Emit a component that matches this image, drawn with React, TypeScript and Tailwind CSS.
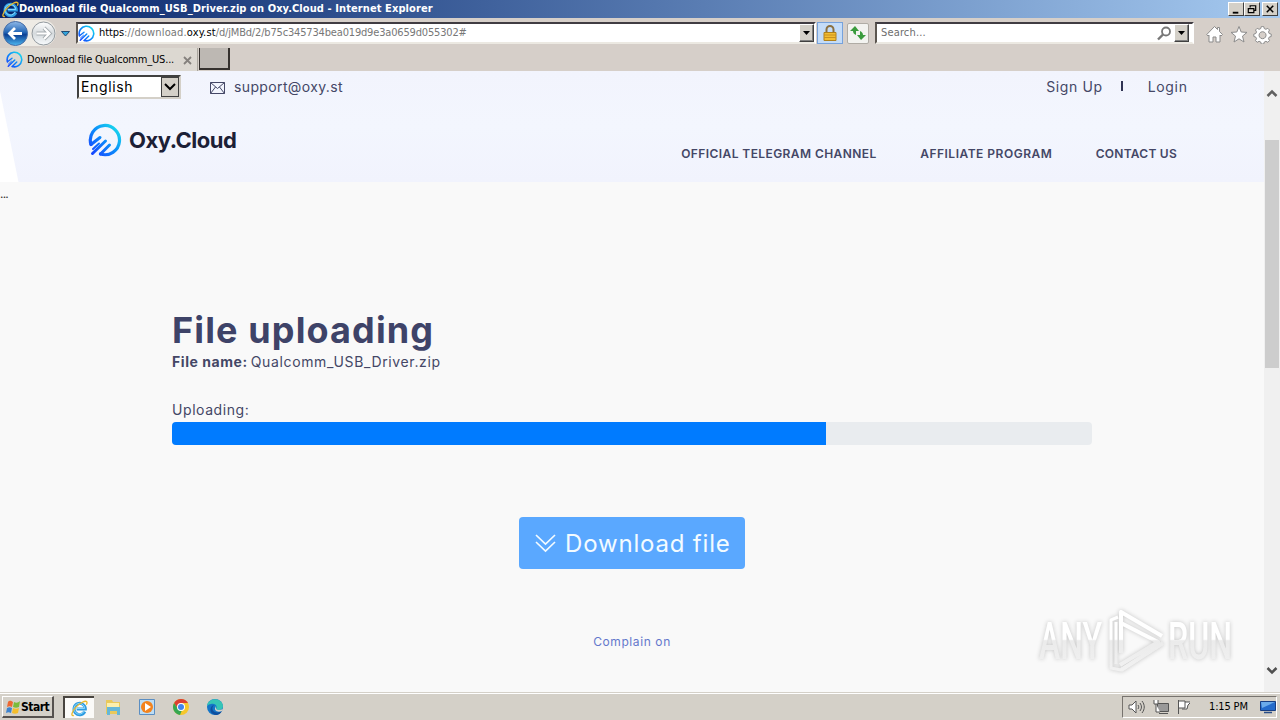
import React from "react";

const OxyLogo: React.FC<{ size: number; id: string }> = ({ size, id }) => (
  <svg width={size} height={size} viewBox="0 0 34 34" fill="none" className="shrink-0">
    <defs>
      <linearGradient id={id} x1="4" y1="30" x2="30" y2="4" gradientUnits="userSpaceOnUse">
        <stop stopColor="#1746ff" />
        <stop offset="0.5" stopColor="#0b8dfa" />
        <stop offset="1" stopColor="#19dcec" />
      </linearGradient>
    </defs>
    <g stroke={`url(#${id})`} strokeWidth="3.2" strokeLinecap="round">
      <path d="M3 21.500A14.600 14.600 0 1 1 12.500 31" />
      <path d="M3 21.500 12 14.500M4.500 30.500 17.500 18M12.500 31 21.500 22" strokeWidth="3" />
      <path d="M5 26 11 20.500" strokeWidth="2" />
    </g>
  </svg>
);

const IeIcon: React.FC<{ size: number }> = ({ size }) => (
  <svg width={size} height={size} viewBox="0 0 18 18" fill="none" className="shrink-0">
    <path
      d="M14.6 12.2A6 6 0 1 1 15.2 9.6H6"
      stroke="#2e9be0"
      strokeWidth="3.2"
    />
    <path d="M14 11.6A5.7 5.7 0 1 1 14.5 9H6" stroke="#8edcff" strokeWidth="1" />
    <path
      d="M3 16.2C-.4 17.6.5 12.6 5 7.8 9.5 3 15.200 .2 16.6 1.800c.7.9.2 2.200-.4 3.200"
      stroke="#e9b92c"
      strokeWidth="1.4"
    />
  </svg>
);

const TitleBar: React.FC = () => (
  <div className="flex h-[18px] items-center bg-linear-to-r from-[#0a246a] to-[#a6caf0] pl-[2px] pr-[2px]">
    <IeIcon size={17} />
    <span className="whitespace-nowrap pt-px text-[11px] font-bold tracking-[0.090px] text-white">
      Download file Qualcomm_USB_Driver.zip on Oxy.Cloud - Internet Explorer
    </span>
    <div className="ml-auto flex">
      <WinButton>
        <path d="M4 10.500h6" strokeWidth="2" />
      </WinButton>
      <WinButton>
        <path d="M5.500 5V3h6v5h-2M3.500 6h6v4.500h-6zM3 6h7M5 3h7" strokeWidth="1.300" />
      </WinButton>
      <div className="w-[2px]" />
      <WinButton>
        <path d="M4 3l7 7M11 3l-7 7" strokeWidth="1.700" />
      </WinButton>
    </div>
  </div>
);

const WinButton: React.FC<{ children: React.ReactNode }> = ({ children }) => (
  <div className="h-[14px] w-[16px] border border-b-[#404040] border-l-white border-r-[#404040] border-t-white bg-[#d4d0c8]">
    <svg width="14" height="12" viewBox="0 0 15 13" fill="none" stroke="#000">
      {children}
    </svg>
  </div>
);

const DropButton: React.FC = () => (
  <div className="flex h-[18px] w-[15px] shrink-0 items-center justify-center border border-b-[#404040] border-l-white border-r-[#404040] border-t-white bg-[#d4d0c8] shadow-[inset_-1px_-1px_#808080]">
    <svg width="7" height="4" viewBox="0 0 7 4">
      <path d="M0 0h7L3.500 4z" />
    </svg>
  </div>
);

const NavBar: React.FC = () => (
  <div className="flex h-[30px] items-center">
    <svg width="76" height="30" viewBox="0 0 76 30" fill="none" className="shrink-0">
      <defs>
        <linearGradient id="back" x1="0" y1="0" x2="0" y2="1">
          <stop stopColor="#8fb9e8" />
          <stop offset="0.45" stopColor="#2366b6" />
          <stop offset="0.55" stopColor="#0b3f94" />
          <stop offset="1" stopColor="#4db9f2" />
        </linearGradient>
        <linearGradient id="forward" x1="0" y1="0" x2="0" y2="1">
          <stop stopColor="#fff" />
          <stop offset="0.5" stopColor="#d5dadd" />
          <stop offset="1" stopColor="#f8fbfd" />
        </linearGradient>
      </defs>
      <path d="M15 2h28a13 13 0 0 1 0 26H15z" fill="#eeebe5" />
      <circle cx="15.500" cy="15.500" r="12" fill="url(#back)" stroke="#456ca6" />
      <path d="M22 15.500H10M15 10l-5.500 5.500L15 21" stroke="#fff" strokeWidth="2.800" />
      <circle cx="43.500" cy="15.500" r="11.500" fill="url(#forward)" stroke="#92999e" />
      <path d="M36.500 15.500H49M44 10l5.500 5.500L44 21" stroke="#a6acb0" strokeWidth="4" />
      <path d="M36.500 15.500H49M44 10l5.500 5.500L44 21" stroke="#fff" strokeWidth="2.200" />
      <path d="M61.500 13.500h8l-4 4.500z" fill="#32a5dc" stroke="#224c74" />
    </svg>
    <div className="flex h-[22px] w-[740px] items-center border-2 border-b-[#ece9e2] border-l-[#5c5650] border-r-white border-t-[#403c42] bg-white">
      <OxyLogo size={17} id="oxyUrl" />
      <span className="ml-[4px] whitespace-nowrap pt-px text-[11px] text-[#777]">
        <span className="tracking-[-0.100px] text-black">https</span>
        <span className="tracking-[0.150px]">://download.</span>
        <span className="tracking-[0.150px] text-black">oxy.st</span>
        <span className="tracking-[-0.170px]">/d/jMBd/2/b75c345734bea019d9e3a0659d055302#</span>
      </span>
      <div className="ml-auto">
        <DropButton />
      </div>
    </div>
    <div className="ml-px flex h-[22px] w-[26px] items-center justify-center border border-[#76a2dc] bg-[#c4dcf8]">
      <svg width="14" height="17" viewBox="0 0 14 17" fill="none">
        <path d="M3.500 8V4.500a3.500 3.500 0 0 1 7 0V8" stroke="#8b7040" strokeWidth="2" />
        <path d="M1 7.500h12v8H1z" fill="#f2bd32" stroke="#af801c" />
        <path d="M1 10h12M1 12.500h12" stroke="#c9911f" />
      </svg>
    </div>
    <div className="ml-[4px] flex h-[21px] w-[22px] items-center justify-center rounded-xs border border-[#b0aca5] bg-[#f3f3f0]">
      <svg width="16" height="14" viewBox="0 0 16 14" fill="#3a9b3d">
        <path d="M5 0 0 5h3c0 2 1 3 3 4V5h3zM11 14l5-5h-3c0-2-1-3-3-4v4H7z" />
      </svg>
    </div>
    <div className="ml-[6px] flex h-[22px] w-[319px] items-center border-2 border-b-[#ece9e2] border-l-[#5c5650] border-r-white border-t-[#403c42] bg-white pr-[3px]">
      <span className="ml-[4px] pt-px text-[11px] tracking-[0.150px] text-[#6d6d6d]">Search...</span>
      <svg width="15" height="15" viewBox="0 0 15 15" fill="none" stroke="#777" className="ml-auto mr-[2px]">
        <circle cx="9" cy="5.500" r="4" strokeWidth="1.800" />
        <path d="m6 8.500-5 5" strokeWidth="2.400" />
      </svg>
      <DropButton />
    </div>
    <svg width="70" height="20" viewBox="0 0 70 20" fill="#fff" stroke="#8b8b8b" className="ml-[12px] mt-[2px] shrink-0">
      <path d="m.8 10.500 7.700-8 3 3V3.500h2v4l3 3-1.500 1.500-1-1v7h-4v-5H7v5H3v-7l-1 1z" />
      <path d="m33 2.500 2.200 5.500 5.800.4-4.500 3.700 1.500 5.900-5-3.200-5 3.200 1.500-5.900L25 8.400l5.800-.4z" />
      <path
        fillRule="evenodd"
        d="m56.300 2.500 1.400.1.600 2 1.600.7 1.900-1 1.700 1.700-1 1.900.7 1.600 2 .6v2.400l-2 .6-.7 1.600 1 1.900-1.700 1.700-1.900-1-1.600.7-.6 2h-2.400l-.6-2-1.600-.7-1.900 1-1.700-1.700 1-1.900-.7-1.600-2-.6v-2.400l2-.6.7-1.600-1-1.900 1.700-1.700 1.900 1 1.600-.7.6-2zM56.500 7.700a3.500 3.500 0 1 0 .1 0z"
      />
    </svg>
  </div>
);

const TabBar: React.FC = () => (
  <div className="flex h-[23px] items-start">
    <div className="flex h-[23px] w-[198px] items-center border-r border-[#aaa69e] bg-[#dcd8d1] pl-[6px]">
      <OxyLogo size={17} id="oxyTab" />
      <span className="ml-[4px] w-[154px] whitespace-nowrap pt-[2px] text-[11px] tracking-[-0.180px] text-black">
        Download file Qualcomm_US...
      </span>
      <svg width="9" height="9" viewBox="0 0 9 9" stroke="#85817d" strokeWidth="1.800" className="ml-[2px] mt-px">
        <path d="m1 1 7 7M8 1 1 8" />
      </svg>
    </div>
    <div className="ml-[1px] h-[22px] w-[31px] border-b-2 border-l border-r-2 border-[#35312e] bg-[#bdb8b3]" />
  </div>
);

const SiteHeader: React.FC = () => (
  <header className="relative h-[111px] bg-linear-to-b from-[#f2f4fd] via-[#f3f6fe] to-[#f1f3fd]">
    <svg width="20" height="111" viewBox="0 0 20 111" className="absolute left-0 top-0">
      <path d="M0 20 18.500 111H0z" fill="#fff" />
    </svg>
    <div className="flex h-[32px] items-center pl-[77px] pr-[77px] text-[14px] text-[#444766]">
      <div className="flex h-[24px] w-[104px] items-center justify-between border-2 border-b-[#d4d0c8] border-l-[#404040] border-r-[#d4d0c8] border-t-[#404040] bg-white pl-[2px] text-black">
        <span className="pb-px tracking-[0.650px]">English</span>
        <div className="flex h-[20px] w-[18px] items-center justify-center border border-[#404040] bg-[#d4d0c8]">
          <svg width="12" height="8" viewBox="0 0 12 8" fill="none" stroke="#000" strokeWidth="2">
            <path d="m1 1 5 5 5-5" />
          </svg>
        </div>
      </div>
      <svg width="15" height="12" viewBox="0 0 15 12" fill="none" stroke="#444766" className="ml-[29px] mt-[1px]">
        <path d="M.5.5h14v11H.5zM.5.500l7 6 7-6M.5 11.500 5.500 5M14.500 11.500 9.500 5" />
      </svg>
      <span className="ml-[9px] pb-[2px] tracking-[0.370px]">support@oxy.st</span>
      <span className="ml-auto pb-[2px] tracking-[0.600px]">Sign Up</span>
      <div className="mb-[2px] ml-[18px] mr-[25px] h-[10px] w-[2px] bg-[#303453]" />
      <span className="-mr-[0.7px] pb-[2px] tracking-[0.700px]">Login</span>
    </div>
    <div className="flex h-[79px] pl-[88px] pr-[87px]">
      <div className="flex h-[74px] items-center">
        <OxyLogo size={34} id="oxyMain" />
        <b className="ml-[7px] text-[22px] tracking-[-0.490px] text-[#1c2036]">Oxy.Cloud</b>
      </div>
      <nav className="ml-auto mt-[42px] flex gap-[43.500px] whitespace-nowrap text-[12px] font-semibold text-[#444766]">
        <span className="tracking-[0.420px]">OFFICIAL TELEGRAM CHANNEL</span>
        <span className="tracking-[0.500px]">AFFILIATE PROGRAM</span>
        <span className="tracking-[0.250px]">CONTACT US</span>
      </nav>
    </div>
  </header>
);

const Watermark: React.FC = () => (
  <svg
    width="210"
    height="76"
    viewBox="0 0 210 76"
    className="absolute bottom-[14px] right-[20px] drop-shadow-[0_0_2px_#c4c4c4]"
  >
    <defs>
      <linearGradient id="mark" x1="0" y1="0" x2="0" y2="76" gradientUnits="userSpaceOnUse">
        <stop offset="0.49" stopColor="#fff" />
        <stop offset="0.51" stopColor="#ebebeb" />
        <stop offset="1" stopColor="#f3f3f3" />
      </linearGradient>
    </defs>
    <g fill="url(#mark)" fontFamily="Roboto, sans-serif" fontSize="51" fontWeight="500">
      <text x="5" y="57" textLength="63" lengthAdjust="spacingAndGlyphs">ANY</text>
      <text x="134" y="57" textLength="64" lengthAdjust="spacingAndGlyphs">RUN</text>
    </g>
    <g fill="none" stroke="url(#mark)" strokeWidth="4" strokeLinejoin="round">
      <path d="M128 34 87 10v41M87 21l37 19-38 23M87 68l42-27" />
      <path d="M84 15 77 18v48l10 2 38-24M82 20v42" strokeWidth="3" />
    </g>
  </svg>
);

const ScrollBar: React.FC = () => (
  <div className="flex w-[16px] shrink-0 flex-col items-center bg-[#f0f0f0]">
    <svg width="12" height="8" viewBox="0 0 12 8" fill="none" stroke="#606060" strokeWidth="2.500" className="mt-[18px]">
      <path d="m1.500 7 4.500-4.500L10.500 7" />
    </svg>
    <div className="mt-[43px] h-[228px] w-[14px] bg-[#cdcdcd]" />
    <svg width="12" height="8" viewBox="0 0 12 8" fill="none" stroke="#505050" strokeWidth="2.500" className="mb-[17px] mt-auto">
      <path d="m1.500 1 4.500 4.500L10.500 1" />
    </svg>
  </div>
);

const UploadPage: React.FC = () => (
  <div className="flex h-[621px] font-[Inter,sans-serif]">
    <div className="relative flex-1 bg-[#f9f9f9] text-[#444766]">
      <SiteHeader />
      <div className="h-[24px] text-[12px] leading-[24px] tracking-[-0.800px] text-[#333]">...</div>
      <main className="mx-[172px] flex flex-col pt-[102px]">
        <h1 className="h-[43px] whitespace-nowrap text-[36px] font-bold leading-[44px] tracking-[1.130px] text-[#3e4368]">
          File uploading
        </h1>
        <p className="h-[24px] whitespace-nowrap text-[14px] leading-[22px]">
          <b className="tracking-[0.560px]">File name:</b>
          <span className="ml-[3px] tracking-[0.640px]">Qualcomm_USB_Driver.zip</span>
        </p>
        <p className="mt-[24px] h-[23px] text-[14px] leading-[22px] tracking-[0.570px]">Uploading:</p>
        <div className="h-[23px] overflow-hidden rounded bg-[#e9ecef]">
          <div className="h-full w-[654px] bg-[#007bff]" />
        </div>
        <button className="mt-[72px] flex h-[52px] w-[226px] items-center self-center rounded bg-[#5aa8ff] pl-[16px] text-[24px] text-[#f3fbff]">
          <svg width="21" height="19" viewBox="0 0 21 19" fill="none" stroke="currentColor" strokeWidth="1.700">
            <path d="m1 1 9.500 9L20 1M1 8l9.500 9L20 8" />
          </svg>
          <span className="ml-[9px] whitespace-nowrap pt-px tracking-[0.820px]">Download file</span>
        </button>
        <a className="mt-[64px] self-center text-[12px] leading-[18px] tracking-[0.600px] text-[#6478cc]">
          Complain on
        </a>
      </main>
      <Watermark />
    </div>
    <ScrollBar />
  </div>
);

const TaskBar: React.FC = () => (
  <div className="flex h-[28px] items-center border-t border-[#d4d0c8] bg-[#d4d0c8] pl-[2px] pr-[3px] pt-px shadow-[inset_0_1px_#fff]">
    <div className="flex h-[22px] w-[52px] items-center border-b-2 border-l border-r-2 border-t border-b-[#55514e] border-l-white border-r-[#55514e] border-t-white pl-[2px]">
      <svg width="16" height="16" viewBox="0 0 16 16" className="shrink-0">
        <path d="M3 3c2-2 3-1 5 0L7 8C5 7 4 7 2 8z" fill="#ed6832" />
        <path d="M9 3c2 1 4 1 6-1l-1 6c-2 1-4 1-6 0z" fill="#7bbb3b" />
        <path d="M2 9c2-1 3-1 5 0l-1 5c-2-1-3-1-5 0z" fill="#3d83cf" />
        <path d="M8 9c2 1 4 1 6 0l-1 5c-2 1-4 1-6 0z" fill="#f5be2c" />
      </svg>
      <b className="pt-px text-[12px] tracking-[-0.500px] text-black">Start</b>
    </div>
    <div className="ml-[9px] flex h-[22px] w-[31px] items-center justify-center border-l-2 border-t-2 border-l-[#48443f] border-t-[#48443f] bg-[#fbfaf8]">
      <IeIcon size={17} />
    </div>
    <svg width="18" height="18" viewBox="0 0 18 18" className="ml-[10px]">
      <path d="M2 2h6l1 2h7v12H2z" fill="#e9c95c" />
      <path d="M3 5h12v7H3z" fill="#fbefad" />
      <path d="M3 9h13v8h-3v-4H6v4H3z" fill="#65b7d8" />
    </svg>
    <svg width="18" height="18" viewBox="0 0 18 18" className="ml-[16px]">
      <path d="M1.500 1.500h15v15h-15z" fill="#bdddf4" stroke="#5b8ec2" />
      <circle cx="9" cy="9" r="6" fill="#f3831d" />
      <path d="m7 5 6 4-6 4z" fill="#fff" />
    </svg>
    <svg width="18" height="18" viewBox="0 0 18 18" className="ml-[16px]">
      <circle cx="9" cy="9" r="8" fill="#f6c72b" />
      <path d="M2.100 5A8 8 0 0 1 16 5H9L6 11z" fill="#dc3f32" />
      <path d="M2.100 5 6 11l4 1-2 5A8 8 0 0 1 2.100 5z" fill="#36a752" />
      <circle cx="9" cy="9" r="4" fill="#fff" />
      <circle cx="9" cy="9" r="3" fill="#4184ed" />
    </svg>
    <svg width="18" height="18" viewBox="0 0 18 18" className="ml-[16px]">
      <circle cx="9" cy="9" r="8" fill="#1476c8" />
      <path d="M1 8C2-1 16-1 17 8c0 4-5 5-7 3 2-3-1-6-5-5-2 0-3 1-4 2z" fill="#36c5b6" />
      <path d="M8 7c-4 4 0 9 6 7l2-1c-2 4-6 5-9 3-4-2-3-8 1-9z" fill="#0f4f9e" />
      <path d="M10 8c-1 4 2 5 7 3l-1 2c-5 2-9-1-6-5z" fill="#d4d0c8" />
    </svg>
    <div className="ml-auto flex h-[22px] w-[155px] items-center border border-b-white border-l-[#77736e] border-r-white border-t-[#77736e] pl-[5px]">
      <svg width="62" height="18" viewBox="0 0 62 18" fill="#fff" stroke="#555" className="mr-[19px] shrink-0">
        <path d="M1 7h3l4-4v12l-4-4H1z" />
        <path d="M10 7c1 2 1 2 0 4M12 5c2 3 2 5 0 8M14 3c3 4 3 8 0 12" fill="none" />
        <path d="M29.500 5.500h11v8h-11zM31 15.500h9" fill="#999" />
        <path d="M26 2v4h4V2M28 6v8h4" />
        <path d="M50.500 2v14M51 3h6v7h-6M57 4h6l-3 3-1 4h-5" />
      </svg>
      <span className="whitespace-nowrap pt-px text-[11px] tracking-[-0.150px] text-black">1:15 PM</span>
      <svg width="16" height="14" viewBox="0 0 16 14" className="ml-auto">
        <path d="M.5 1.500h15v9H.5z" fill="#246bcb" stroke="#173e83" />
        <path d="M1 2h14L2 8z" fill="#6babea" />
        <path d="M4 12.500h8" stroke="#284d87" strokeWidth="1.500" />
      </svg>
    </div>
  </div>
);

const App: React.FC = () => {
  return (
    <div className="h-[720px] w-[1280px] overflow-hidden bg-[#d6cfc9] font-['DejaVu_Sans_Condensed','DejaVu_Sans',sans-serif]">
      <TitleBar />
      <NavBar />
      <TabBar />
      <UploadPage />
      <TaskBar />
    </div>
  );
};
export default App;
